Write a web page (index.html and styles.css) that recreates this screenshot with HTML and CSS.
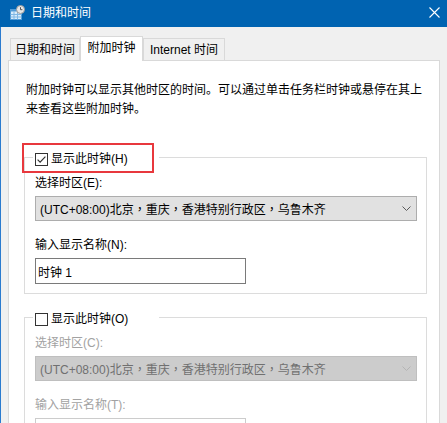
FILE: index.html
```html
<!DOCTYPE html>
<html lang="zh-CN">
<head>
<meta charset="utf-8">
<title>日期和时间</title>
<link rel="stylesheet" href="styles.css">
</head>
<body>
<div class="window">
  <div class="titlebar">
    <svg class="app-icon" width="15" height="15" viewBox="0 0 15 15">
      <rect x="0.5" y="4.5" width="11" height="10" fill="#d7ecfb" stroke="#4f9ad6"/>
      <rect x="0.5" y="4.5" width="11" height="2" fill="#4f9ad6"/>
      <path d="M4 6.5V14.5M7.5 6.5V14.5M0.5 9.5H11.5M0.5 12H11.5" stroke="#7fb7e4" stroke-width="1"/>
      <circle cx="10.5" cy="4.5" r="4" fill="#e8e8e8" stroke="#9a9a9a"/>
      <path d="M10.5 2.2V4.7H12.4" stroke="#555" stroke-width="1" fill="none"/>
    </svg>
    <span class="title">日期和时间</span>
    <svg class="close" width="11" height="11" viewBox="0 0 11 11">
      <path d="M0.5 0.5L10.5 10.5M10.5 0.5L0.5 10.5" stroke="#fff" stroke-width="1.1"/>
    </svg>
  </div>
  <div class="main">
    <div class="tabs">
      <div class="tab">日期和时间</div>
      <div class="tab selected">附加时钟</div>
      <div class="tab tab-wide">Internet 时间</div>
    </div>
    <div class="panel">
      <p class="desc">附加时钟可以显示其他时区的时间。可以通过单击任务栏时钟或悬停在其上来查看这些附加时钟。</p>

      <div class="group">
        <div class="highlight"></div>
        <div class="legend">
          <svg class="checkbox" width="13" height="13" viewBox="0 0 13 13">
            <rect x="0.5" y="0.5" width="12" height="12" fill="#fff" stroke="#333"/>
            <path d="M2.6 6.6L5.1 9.1L10.4 3.6" stroke="#333" stroke-width="1.2" fill="none"/>
          </svg>
          <span>显示此时钟(H)</span>
        </div>
        <div class="label">选择时区(E):</div>
        <div class="select">
          <span>(UTC+08:00)北京<span class="comma" lang="zh-TW">，</span>重庆<span class="comma" lang="zh-TW">，</span>香港特别行政区<span class="comma" lang="zh-TW">，</span>乌鲁木齐</span>
          <svg class="chevron" width="9" height="5" viewBox="0 0 9 5"><path d="M0.5 0.5L4.5 4.5L8.5 0.5" stroke="#5a5a5a" fill="none"/></svg>
        </div>
        <div class="label label-gap">输入显示名称(N):</div>
        <div class="input">时钟 1</div>
      </div>

      <div class="group group-second">
        <div class="legend">
          <svg class="checkbox" width="13" height="13" viewBox="0 0 13 13">
            <rect x="0.5" y="0.5" width="12" height="12" fill="#fff" stroke="#333"/>
          </svg>
          <span>显示此时钟(O)</span>
        </div>
        <div class="label disabled-text">选择时区(C):</div>
        <div class="select select-disabled">
          <span>(UTC+08:00)北京<span class="comma" lang="zh-TW">，</span>重庆<span class="comma" lang="zh-TW">，</span>香港特别行政区<span class="comma" lang="zh-TW">，</span>乌鲁木齐</span>
          <svg class="chevron" width="9" height="5" viewBox="0 0 9 5"><path d="M0.5 0.5L4.5 4.5L8.5 0.5" stroke="#b4b4b4" fill="none"/></svg>
        </div>
        <div class="label label-gap disabled-text">输入显示名称(T):</div>
        <div class="input input-disabled"></div>
      </div>
    </div>
  </div>
</div>
</body>
</html>
```

FILE: styles.css
```css
html, body {
  margin: 0;
  padding: 0;
}

body {
  width: 447px;
  height: 423px;
  overflow: hidden;
  background: #f0f0f0;
  font-family: "Liberation Sans", "Noto Sans CJK SC", sans-serif;
  font-size: 12px;
  color: #000;
}

.window {
  width: 447px;
  height: 423px;
  display: flex;
  flex-direction: column;
  overflow: hidden;
}

.titlebar {
  height: 27px;
  flex: none;
  background: #0063b1;
  color: #fff;
  display: flex;
  align-items: center;
  padding: 0 7px 2px 10px;
  box-sizing: border-box;
}

.app-icon {
  flex: none;
  margin-right: 6px;
}

.title {
  font-size: 12px;
  line-height: 16px;
}

.close {
  margin-left: auto;
  margin-bottom: 1px;
}

.main {
  flex: 1;
  min-height: 0;
  display: flex;
  flex-direction: column;
  border-left: 1px solid #2b7bcf;
  padding: 9px 0 0 7px;
}

.tabs {
  flex: none;
  display: flex;
  align-items: flex-end;
  padding-left: 2px;
  height: 25px;
  margin-bottom: -1px;
}

.tab {
  box-sizing: border-box;
  width: 70px;
  height: 22px;
  margin-bottom: 1px;
  border: 1px solid #d9d9d9;
  border-bottom: none;
  background: #f0f0f0;
  display: flex;
  align-items: center;
  justify-content: center;
  line-height: 16px;
  white-space: nowrap;
}

.tab.selected {
  width: 63px;
  height: 25px;
  margin-bottom: 0;
  background: #fff;
  position: relative;
  z-index: 1;
  padding-bottom: 2px;
}

.tab-wide {
  width: 82px;
}

.panel {
  flex: 1;
  min-height: 0;
  overflow: hidden;
  width: 432px;
  box-sizing: border-box;
  border: 1px solid #d9d9d9;
  border-bottom: none;
  background: #fff;
  padding: 20px 0 0 15px;
}

.desc {
  margin: 0;
  padding-left: 2px;
  width: 400px;
  line-height: 19px;
}

.group {
  position: relative;
  width: 403px;
  box-sizing: border-box;
  margin-top: 38px;
  border: 1px solid #dcdcdc;
  padding: 0 0 9px 10px;
}

.group-second {
  margin-top: 23px;
}

.highlight {
  position: absolute;
  left: -3px;
  top: -15px;
  width: 132px;
  height: 30px;
  box-sizing: border-box;
  border: 2px solid #e8383d;
  z-index: 2;
}

.legend {
  display: flex;
  align-items: center;
  gap: 3px;
  height: 16px;
  width: 126px;
  box-sizing: border-box;
  margin: -7px 0 0 -2px;
  padding-left: 2px;
  background: #fff;
  line-height: 16px;
  white-space: nowrap;
}

.checkbox {
  flex: none;
}

.label {
  margin-top: 8px;
  line-height: 16px;
}

.label-gap {
  margin-top: 16px;
}

.disabled-text {
  color: #a2a2a2;
}

.select {
  margin-top: 5px;
  width: 382px;
  height: 25px;
  box-sizing: border-box;
  border: 1px solid #adadad;
  background: #e1e1e1;
  display: flex;
  align-items: center;
  padding: 0 5px 0 4px;
  white-space: nowrap;
}

.comma {
  font-family: "Noto Sans CJK TC", "Noto Sans CJK SC", sans-serif;
}

.select-disabled {
  border-color: #bfbfbf;
  background: #cccccc;
  color: #707070;
}

.chevron {
  margin-left: auto;
  flex: none;
}

.input {
  margin-top: 5px;
  width: 211px;
  height: 26px;
  box-sizing: border-box;
  border: 1px solid #7a7a7a;
  background: #fff;
  padding-left: 2px;
  display: flex;
  align-items: center;
}

.input-disabled {
  border-color: #cccccc;
}
```
